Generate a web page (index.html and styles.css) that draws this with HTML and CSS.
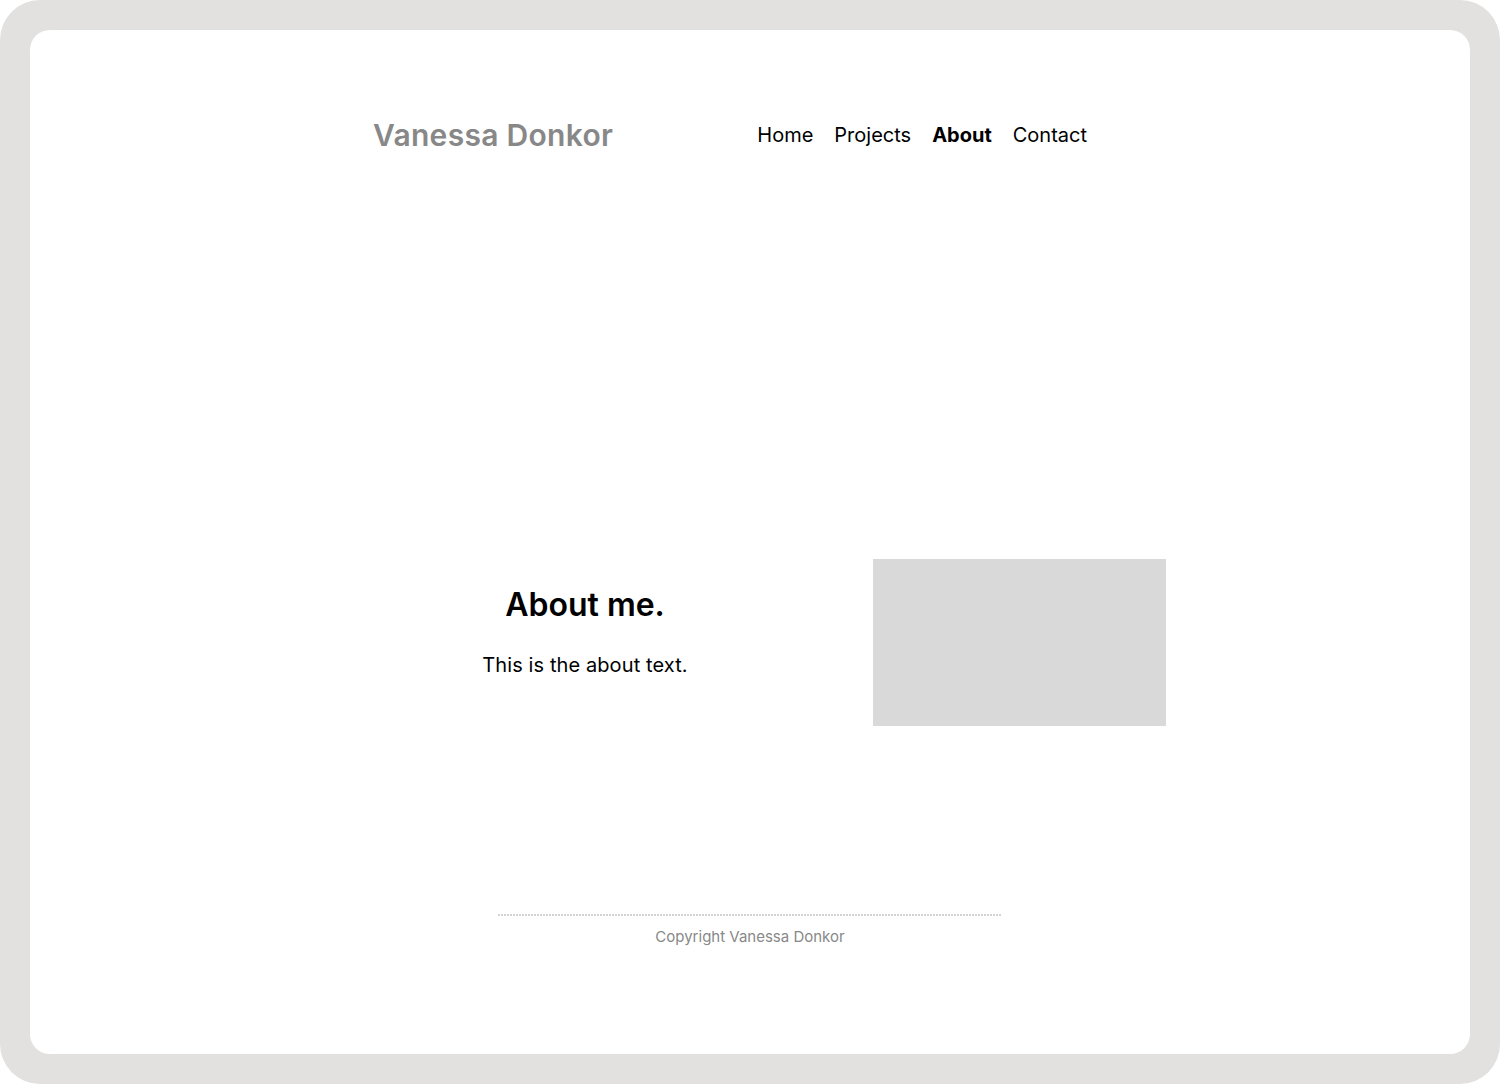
FILE: index.html
```html
<!DOCTYPE html>
<html lang="en">
<head>
<meta charset="utf-8">
<title>About - Vanessa Donkor</title>
<link rel="stylesheet" href="styles.css">
</head>
<body>
<div class="frame">
  <div class="card">
    <header class="header">
      <div class="logo">Vanessa Donkor</div>
      <nav class="nav">
        <a class="nav-link" href="#">Home</a>
        <a class="nav-link" href="#">Projects</a>
        <a class="nav-link active" href="#">About</a>
        <a class="nav-link" href="#">Contact</a>
      </nav>
    </header>
    <main class="about">
      <div class="about-text">
        <h1 class="about-title">About me.</h1>
        <p class="about-body">This is the about text.</p>
      </div>
      <div class="about-image"></div>
    </main>
    <footer class="footer">
      <div class="footer-rule"></div>
      <p class="footer-text">Copyright Vanessa Donkor</p>
    </footer>
  </div>
</div>
</body>
</html>
```
FILE: styles.css
```css
* { box-sizing: border-box; }
html, body { margin: 0; padding: 0; background: #ffffff; }
body { font-family: Inter, "Noto Sans", sans-serif; color: #000; }

.frame {
  width: 1500px;
  height: 1084px;
  background: #e2e1df;
  border-radius: 40px;
  padding: 30px;
}
.card {
  height: 1024px;
  background: #ffffff;
  border-radius: 20px;
  display: flex;
  flex-direction: column;
  align-items: center;
}

.header {
  width: 754px;
  margin-top: 87px;
  display: flex;
  align-items: center;
  justify-content: space-between;
  padding-right: 40px;
}
.logo {
  font-size: 30px;
  font-weight: 600;
  color: #888888;
  line-height: 36px;
  letter-spacing: 0.3px;
}
.nav { display: flex; gap: 21px; }
.nav-link {
  font-size: 20px;
  line-height: 24px;
  color: #000;
  text-decoration: none;
}
.nav-link.active { font-weight: 700; }

.about {
  width: 793px;
  margin-top: 406px;
  margin-left: 39px;
  display: flex;
  align-items: flex-start;
  gap: 76px;
}
.about-text {
  width: 424px;
  flex-shrink: 0;
  text-align: center;
  padding-top: 26px;
}
.about-title {
  margin: 0;
  font-size: 32px;
  font-weight: 600;
  line-height: 39px;
}
.about-body {
  margin: 29px 0 0;
  font-size: 20px;
  line-height: 24px;
  letter-spacing: 0.1px;
}
.about-image {
  width: 293px;
  height: 167px;
  background: #d9d9d9;
  flex-shrink: 0;
}

.footer {
  margin-top: 188px;
  width: 504px;
  display: flex;
  flex-direction: column;
  align-items: center;
}
.footer-rule {
  width: 100%;
  height: 2px;
  background: repeating-linear-gradient(90deg, #d4d4d4 0 2px, transparent 2px 3px);
}
.footer-text {
  margin: 12px 0 0;
  font-size: 15px;
  line-height: 18px;
  color: #888888;
}
```
